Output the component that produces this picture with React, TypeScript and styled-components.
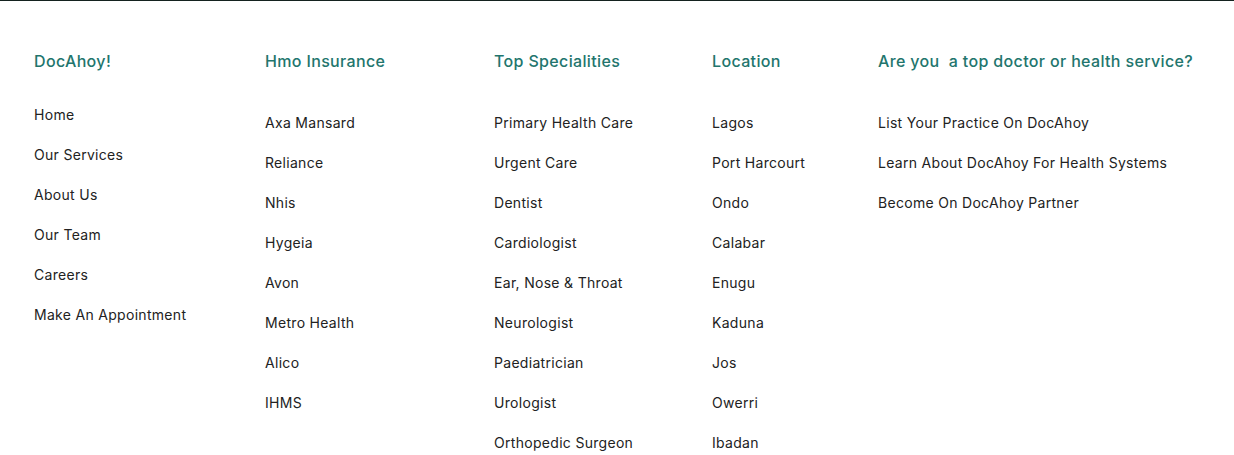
import React from "react";
import styled, { createGlobalStyle } from "styled-components";

const Global = createGlobalStyle`
  html, body { margin: 0; padding: 0; background: #ffffff; }
  body { font-family: "Inter", "Noto Sans", sans-serif; }
`;

const Footer = styled.footer`
  border-top: 1px solid #14221f;
  display: grid;
  grid-template-columns: 231px 229px 218px 166px 1fr;
  padding: 48px 0 0 34px;
  height: 406px;
  box-sizing: content-box;
  overflow: hidden;
`;

const Column = styled.div`
  display: flex;
  flex-direction: column;
`;

const Heading = styled.h3`
  margin: 0;
  font-size: 16px;
  line-height: 24px;
  font-weight: 500;
  color: #22756d;
  white-space: pre;
  letter-spacing: 0.35px;
`;

const List = styled.ul<{ $offset: number }>`
  list-style: none;
  margin: ${(p) => p.$offset}px 0 0 0;
  padding: 0;
  display: flex;
  flex-direction: column;
  gap: 20px;
`;

const Item = styled.li`
  font-size: 14px;
  line-height: 20px;
  color: #222222;
  white-space: nowrap;
  letter-spacing: 0.3px;
`;

type Col = { title: string; items: string[]; offset: number };

const columns: Col[] = [
  {
    title: "DocAhoy!",
    offset: 32,
    items: ["Home", "Our Services", "About Us", "Our Team", "Careers", "Make An Appointment"],
  },
  {
    title: "Hmo Insurance",
    offset: 40,
    items: ["Axa Mansard", "Reliance", "Nhis", "Hygeia", "Avon", "Metro Health", "Alico", "IHMS"],
  },
  {
    title: "Top Specialities",
    offset: 40,
    items: [
      "Primary Health Care",
      "Urgent Care",
      "Dentist",
      "Cardiologist",
      "Ear, Nose & Throat",
      "Neurologist",
      "Paediatrician",
      "Urologist",
      "Orthopedic Surgeon",
    ],
  },
  {
    title: "Location",
    offset: 40,
    items: ["Lagos", "Port Harcourt", "Ondo", "Calabar", "Enugu", "Kaduna", "Jos", "Owerri", "Ibadan"],
  },
  {
    title: "Are you  a top doctor or health service?",
    offset: 40,
    items: [
      "List Your Practice On DocAhoy",
      "Learn About DocAhoy For Health Systems",
      "Become On DocAhoy Partner",
    ],
  },
];

export default function App() {
  return (
    <>
      <Global />
      <Footer>
        {columns.map((c) => (
          <Column key={c.title}>
            <Heading>{c.title}</Heading>
            <List $offset={c.offset}>
              {c.items.map((i) => (
                <Item key={i}>{i}</Item>
              ))}
            </List>
          </Column>
        ))}
      </Footer>
    </>
  );
}
